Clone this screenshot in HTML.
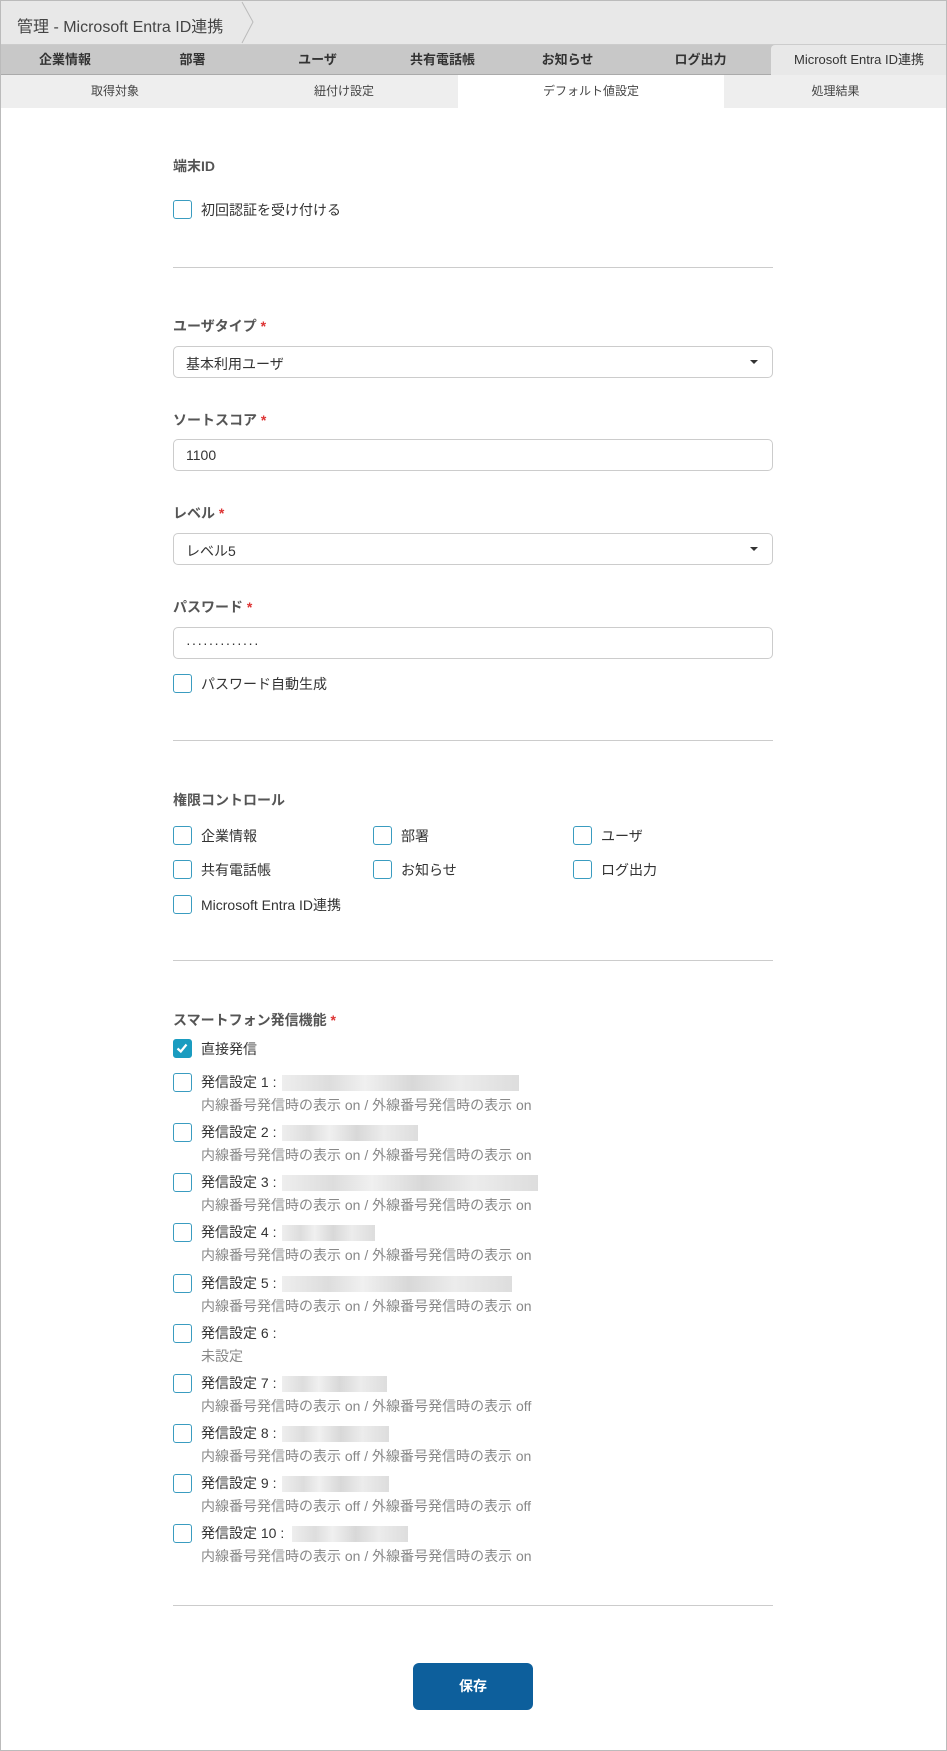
<!DOCTYPE html>
<html><head><meta charset="utf-8"><style>
*{box-sizing:border-box;margin:0;padding:0}
body{width:947px;height:1751px;background:#fff;font-family:"Liberation Sans","Noto Sans CJK JP",sans-serif;color:#333;position:relative;overflow:hidden}
.frame{position:absolute;left:0;top:0;width:947px;height:1751px;border:1px solid #bbb}
.a{position:absolute}
.title{left:0;top:0;width:947px;height:45px;background:#e8e8e8;border-bottom:1px solid #ccc;font-size:16px;color:#444;padding:13px 0 0 17px}
.tabs{left:0;top:45px;width:947px;height:30px;background:#c8c8c8;border-bottom:1px solid #aaa}
.tab{position:absolute;top:0;height:30px;line-height:30px;font-size:13px;color:#333;text-align:center;font-weight:bold}
.sub{left:0;top:75px;width:947px;height:33px;background:#eee}
.st{position:absolute;top:0;height:33px;line-height:33px;font-size:12px;color:#444;text-align:center}
.lbl{font-size:14px;color:#555;font-weight:bold}
.req{color:#d33}
.cb{position:absolute;width:19px;height:19px;border:1.5px solid #3a9cc0;border-radius:3px;background:#fff}
.ct{position:absolute;font-size:14px;color:#333}
.box{position:absolute;left:173px;width:600px;height:32px;border:1px solid #ccc;border-radius:5px;font-size:14px;padding:7px 12px;color:#333}
.arr{position:absolute;right:14px;top:13px;border-left:4px solid transparent;border-right:4px solid transparent;border-top:4px solid #333}
.hr{position:absolute;left:173px;width:600px;height:1px;background:#ccc}
.sm{position:absolute;font-size:14px;color:#888}
.blur{position:absolute;height:16px;background:linear-gradient(90deg,#eee,#ddd 20%,#f0f0f0 35%,#d8d8d8 55%,#ececec 75%,#ddd)}
</style></head><body>
<div class="a title">管理 - Microsoft Entra ID連携</div>
<svg class="a" style="left:240px;top:0" width="16" height="45"><path d="M2 2 L13 22 L2 43" stroke="#bbb" fill="none"/></svg>
<div class="a tabs">
<div class="tab" style="left:0;width:130px">企業情報</div>
<div class="tab" style="left:130px;width:125px">部署</div>
<div class="tab" style="left:255px;width:125px">ユーザ</div>
<div class="tab" style="left:380px;width:125px">共有電話帳</div>
<div class="tab" style="left:505px;width:125px">お知らせ</div>
<div class="tab" style="left:630px;width:141px">ログ出力</div>
<div class="tab" style="left:771px;width:176px;background:#e8e8e8;font-weight:normal;border-radius:4px 0 0 0;height:31px">Microsoft Entra ID連携</div>
</div>
<div class="a sub">
<div class="st" style="left:0;width:230px">取得対象</div>
<div class="st" style="left:230px;width:228px">紐付け設定</div>
<div class="st" style="left:458px;width:266px;background:#fff">デフォルト値設定</div>
<div class="st" style="left:724px;width:223px">処理結果</div>
</div>

<div class="a lbl" style="left:173px;top:156px">端末ID</div>
<div class="cb" style="left:173px;top:200px"></div><div class="ct" style="left:201px;top:200px">初回認証を受け付ける</div>
<div class="hr" style="top:267px"></div>

<div class="a lbl" style="left:173px;top:316px">ユーザタイプ <span class="req">*</span></div>
<div class="box" style="top:346px">基本利用ユーザ<div class="arr"></div></div>
<div class="a lbl" style="left:173px;top:410px">ソートスコア <span class="req">*</span></div>
<div class="box" style="top:439px">1100</div>
<div class="a lbl" style="left:173px;top:503px">レベル <span class="req">*</span></div>
<div class="box" style="top:533px">レベル5<div class="arr"></div></div>
<div class="a lbl" style="left:173px;top:597px">パスワード <span class="req">*</span></div>
<div class="box" style="top:627px;letter-spacing:1px">·············</div>
<div class="cb" style="left:173px;top:674px"></div><div class="ct" style="left:201px;top:674px">パスワード自動生成</div>
<div class="hr" style="top:740px"></div>

<div class="a lbl" style="left:173px;top:790px">権限コントロール</div>
<div class="cb" style="left:173px;top:826px"></div><div class="ct" style="left:201px;top:826px">企業情報</div>
<div class="cb" style="left:373px;top:826px"></div><div class="ct" style="left:401px;top:826px">部署</div>
<div class="cb" style="left:573px;top:826px"></div><div class="ct" style="left:601px;top:826px">ユーザ</div>
<div class="cb" style="left:173px;top:860px"></div><div class="ct" style="left:201px;top:860px">共有電話帳</div>
<div class="cb" style="left:373px;top:860px"></div><div class="ct" style="left:401px;top:860px">お知らせ</div>
<div class="cb" style="left:573px;top:860px"></div><div class="ct" style="left:601px;top:860px">ログ出力</div>
<div class="cb" style="left:173px;top:895px"></div><div class="ct" style="left:201px;top:895px">Microsoft Entra ID連携</div>
<div class="hr" style="top:960px"></div>

<div class="a lbl" style="left:173px;top:1010px">スマートフォン発信機能 <span class="req">*</span></div>
<div class="cb" style="left:173px;top:1039px;background:#1a9cc0;border-color:#1a9cc0"><svg width="16" height="16" style="position:absolute;left:0;top:0"><path d="M3.5 8.5 L6.8 11.5 L12.5 4.5" stroke="#fff" stroke-width="2.2" fill="none"/></svg></div>
<div class="ct" style="left:201px;top:1039px">直接発信</div>

<div class="cb" style="left:173px;top:1073px"></div><div class="ct" style="left:201px;top:1072px">発信設定 1 :</div><div class="blur" style="left:282px;top:1075px;width:237px"></div><div class="sm" style="left:201px;top:1095px">内線番号発信時の表示 on / 外線番号発信時の表示 on</div>
<div class="cb" style="left:173px;top:1123px"></div><div class="ct" style="left:201px;top:1122px">発信設定 2 :</div><div class="blur" style="left:282px;top:1125px;width:136px"></div><div class="sm" style="left:201px;top:1145px">内線番号発信時の表示 on / 外線番号発信時の表示 on</div>
<div class="cb" style="left:173px;top:1173px"></div><div class="ct" style="left:201px;top:1172px">発信設定 3 :</div><div class="blur" style="left:282px;top:1175px;width:256px"></div><div class="sm" style="left:201px;top:1195px">内線番号発信時の表示 on / 外線番号発信時の表示 on</div>
<div class="cb" style="left:173px;top:1223px"></div><div class="ct" style="left:201px;top:1222px">発信設定 4 :</div><div class="blur" style="left:282px;top:1225px;width:93px"></div><div class="sm" style="left:201px;top:1245px">内線番号発信時の表示 on / 外線番号発信時の表示 on</div>
<div class="cb" style="left:173px;top:1274px"></div><div class="ct" style="left:201px;top:1273px">発信設定 5 :</div><div class="blur" style="left:282px;top:1276px;width:230px"></div><div class="sm" style="left:201px;top:1296px">内線番号発信時の表示 on / 外線番号発信時の表示 on</div>
<div class="cb" style="left:173px;top:1324px"></div><div class="ct" style="left:201px;top:1323px">発信設定 6 :</div><div class="sm" style="left:201px;top:1346px">未設定</div>
<div class="cb" style="left:173px;top:1374px"></div><div class="ct" style="left:201px;top:1373px">発信設定 7 :</div><div class="blur" style="left:282px;top:1376px;width:105px"></div><div class="sm" style="left:201px;top:1396px">内線番号発信時の表示 on / 外線番号発信時の表示 off</div>
<div class="cb" style="left:173px;top:1424px"></div><div class="ct" style="left:201px;top:1423px">発信設定 8 :</div><div class="blur" style="left:282px;top:1426px;width:107px"></div><div class="sm" style="left:201px;top:1446px">内線番号発信時の表示 off / 外線番号発信時の表示 on</div>
<div class="cb" style="left:173px;top:1474px"></div><div class="ct" style="left:201px;top:1473px">発信設定 9 :</div><div class="blur" style="left:282px;top:1476px;width:107px"></div><div class="sm" style="left:201px;top:1496px">内線番号発信時の表示 off / 外線番号発信時の表示 off</div>
<div class="cb" style="left:173px;top:1524px"></div><div class="ct" style="left:201px;top:1523px">発信設定 10 :</div><div class="blur" style="left:292px;top:1526px;width:116px"></div><div class="sm" style="left:201px;top:1546px">内線番号発信時の表示 on / 外線番号発信時の表示 on</div>
<div class="hr" style="top:1605px"></div>

<div class="a" style="left:413px;top:1663px;width:120px;height:47px;background:#0d5f9c;border-radius:6px;color:#fff;font-size:14px;font-weight:bold;text-align:center;line-height:47px">保存</div>
<div class="frame"></div>
</body></html>
